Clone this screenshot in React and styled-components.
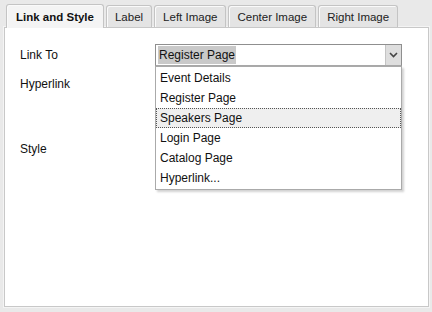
import React from "react";
import styled, { createGlobalStyle } from "styled-components";

const Global = createGlobalStyle`
  html, body {
    margin: 0;
    padding: 0;
    background: #e9e9e9;
  }
  body {
    font-family: Tahoma, "Liberation Sans", Arial, sans-serif;
    font-size: 12px;
    color: #111;
  }
`;

const Frame = styled.div`
  width: 432px;
  height: 312px;
  box-sizing: border-box;
  padding: 4px 3px 5px 4px;
  background: #e9e9e9;
  display: flex;
  flex-direction: column;
`;

const TabBar = styled.div`
  display: flex;
  align-items: flex-end;
  gap: 2px;
  padding-left: 2px;
  height: 23px;
  position: relative;
  z-index: 1;
`;

const Tab = styled.div`
  height: ${(p) => (p.$active ? "24px" : "22px")};
  box-sizing: border-box;
  padding: 0 ${(p) => (p.$active ? "9px" : "8px")};
  display: flex;
  align-items: center;
  border: 1px solid #c4c4c4;
  border-bottom: none;
  border-radius: 3px 3px 0 0;
  box-shadow: inset 1px 1px 0 #fafafa;
  background: ${(p) => (p.$active ? "#f4f4f4" : "#e4e4e4")};
  font-size: 11.5px;
  font-weight: ${(p) => (p.$active ? "bold" : "normal")};
  color: ${(p) => (p.$active ? "#111" : "#222")};
  margin-bottom: ${(p) => (p.$active ? "-1px" : "0")};
`;

const Panel = styled.div`
  flex: 1;
  background: #fff;
  border: 1px solid #c8c8c8;
  box-shadow: 0 0 0 1px #f4f4f4;
  position: relative;
  padding: 16px 15px;
  display: grid;
  grid-template-columns: 135px 247px;
  grid-template-rows: 22px 72px 22px;
  align-content: start;
`;

const Label = styled.div`
  display: flex;
  align-items: ${(p) => (p.$top ? "flex-start" : "center")};
  padding-top: ${(p) => (p.$top ? "11px" : "0")};
`;

const SelectWrap = styled.div`
  position: relative;
`;

const Select = styled.div`
  height: 22px;
  box-sizing: border-box;
  border: 1px solid #8f8f8f;
  border-bottom-color: #a8a8a8;
  display: flex;
  align-items: stretch;
  background: #fff;
`;

const Value = styled.div`
  flex: 1;
  display: flex;
  align-items: center;
  padding-left: 2px;
`;

const Selected = styled.span`
  background: #c9c9c9;
  padding: 2px 1px 2px 1px;
  line-height: 14px;
`;

const Arrow = styled.div`
  width: 15px;
  background: #dedede;
  border-left: 1px solid #c4c4c4;
  display: flex;
  align-items: center;
  justify-content: center;
`;

const List = styled.div`
  position: absolute;
  top: 22px;
  left: 0;
  width: 247px;
  box-sizing: border-box;
  background: #fff;
  border: 1px solid #aaa;
  box-shadow: 2px 2px 2px rgba(0, 0, 0, 0.18);
  padding: 1px 0 1px;
`;

const Item = styled.div`
  height: 20px;
  box-sizing: border-box;
  display: flex;
  align-items: center;
  padding-left: 3px;
  border: 1px dotted ${(p) => (p.$focus ? "#555" : "transparent")};
  background: ${(p) => (p.$focus ? "#efefef" : "transparent")};
`;

const tabs = ["Link and Style", "Label", "Left Image", "Center Image", "Right Image"];
const options = [
  "Event Details",
  "Register Page",
  "Speakers Page",
  "Login Page",
  "Catalog Page",
  "Hyperlink...",
];

export default function App() {
  return (
    <>
      <Global />
      <Frame>
        <TabBar>
          {tabs.map((t, i) => (
            <Tab key={t} $active={i === 0}>
              {t}
            </Tab>
          ))}
        </TabBar>
        <Panel>
          <Label>Link To</Label>
          <SelectWrap>
            <Select>
              <Value>
                <Selected>Register Page</Selected>
              </Value>
              <Arrow>
                <svg width="9" height="6" viewBox="0 0 9 6">
                  <path d="M1 1 L4.5 4.5 L8 1" fill="none" stroke="#444" strokeWidth="1.6" />
                </svg>
              </Arrow>
            </Select>
            <List>
              {options.map((o) => (
                <Item key={o} $focus={o === "Speakers Page"}>
                  {o}
                </Item>
              ))}
            </List>
          </SelectWrap>
          <Label $top>Hyperlink</Label>
          <div />
          <Label>Style</Label>
          <div />
        </Panel>
      </Frame>
    </>
  );
}
